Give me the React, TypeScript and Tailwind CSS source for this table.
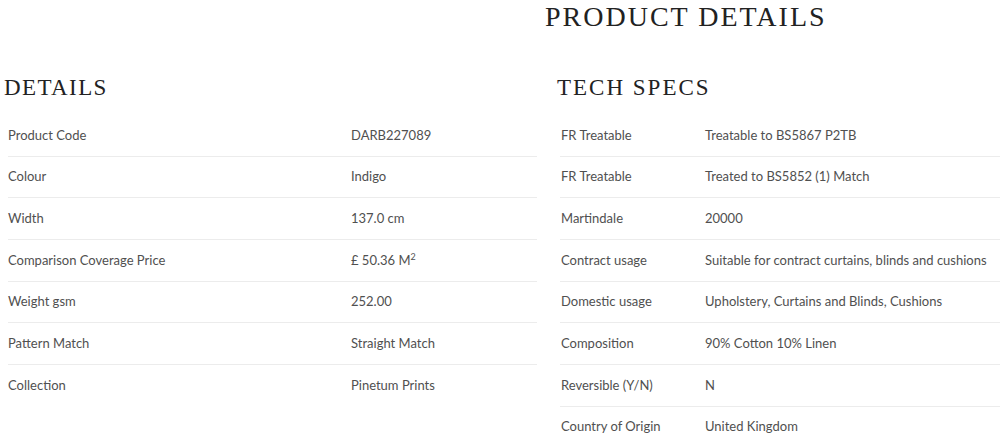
const details: [string, React.ReactNode][] = [
  ['Product Code', 'DARB227089'],
  ['Colour', 'Indigo'],
  ['Width', '137.0 cm'],
  [
    'Comparison Coverage Price',
    <>
      £ 50.36 M<sup className="text-[9px]">2</sup>
    </>,
  ],
  ['Weight gsm', '252.00'],
  ['Pattern Match', 'Straight Match'],
  ['Collection', 'Pinetum Prints'],
];

const specs: [string, string][] = [
  ['FR Treatable', 'Treatable to BS5867 P2TB'],
  ['FR Treatable', 'Treated to BS5852 (1) Match'],
  ['Martindale', '20000'],
  ['Contract usage', 'Suitable for contract curtains, blinds and cushions'],
  ['Domestic usage', 'Upholstery, Curtains and Blinds, Cushions'],
  ['Composition', '90% Cotton 10% Linen'],
  ['Reversible (Y/N)', 'N'],
  ['Country of Origin', 'United Kingdom'],
];

const serif = "font-['Liberation_Serif',serif] text-[#222] uppercase";

export default function App() {
  return (
    <div className="w-[1000px] h-[439px] overflow-hidden bg-white font-['Lato',sans-serif] text-[13px] text-[#505050]">
      <h1 className={`${serif} pl-[545px] pt-[3px] text-[28px] leading-[28px] tracking-[2px]`}>
        Product Details
      </h1>

      <div className="grid grid-cols-[537px_1fr] gap-[20px] mt-[45px]">
        {/* Details */}
        <section>
          <h2 className={`${serif} pl-[4px] text-[23px] leading-[24px] tracking-[1.4px]`}>Details</h2>
          <div className="mt-[15px] pl-[8px]">
            {details.map(([label, value], i) => (
              <div
                key={label}
                className={`flex items-center h-[41.7px] ${
                  i < details.length - 1 ? 'border-b border-[#ececec]' : ''
                }`}
              >
                <span className="w-[343px]">{label}</span>
                <span>{value}</span>
              </div>
            ))}
          </div>
        </section>

        {/* Tech specs */}
        <section>
          <h2 className={`${serif} text-[23px] leading-[24px] tracking-[2px]`}>Tech Specs</h2>
          <div className="mt-[15px] pl-[3px]">
            {specs.map(([label, value], i) => (
              <div key={i} className="flex items-center h-[41.7px] border-b border-[#ececec] pl-px">
                <span className="w-[144px]">{label}</span>
                <span>{value}</span>
              </div>
            ))}
          </div>
        </section>
      </div>
    </div>
  );
}
